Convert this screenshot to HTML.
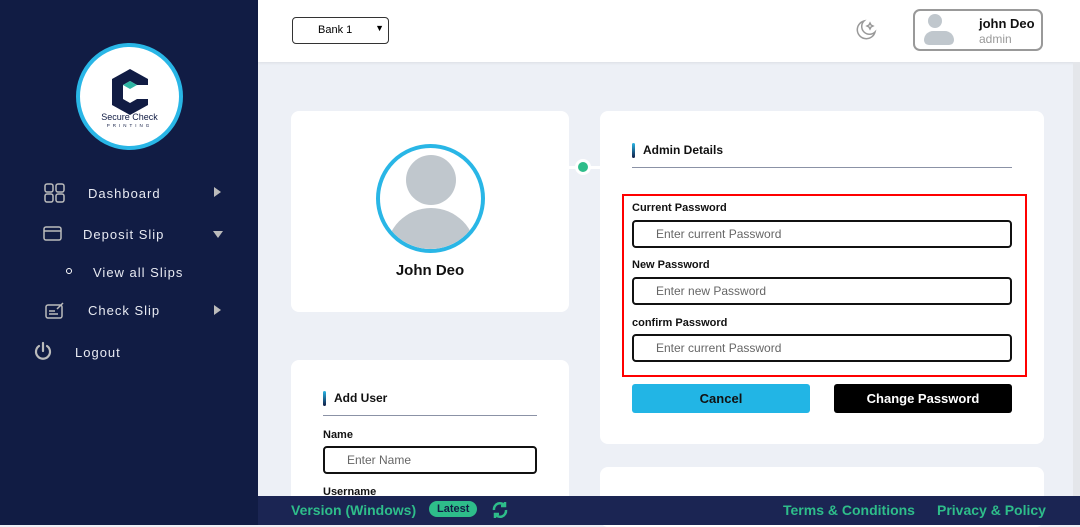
<!DOCTYPE html>
<html><head><style>
*{box-sizing:border-box;margin:0;padding:0}
body{width:1080px;height:525px;overflow:hidden;font-family:"Liberation Sans",sans-serif;background:#edf0f6;position:relative}
.sb{position:absolute;left:0;top:0;width:258px;height:525px;background:#111c44}
.logo{position:absolute;left:76px;top:43px;width:107px;height:107px;border-radius:50%;background:#fff;border:4px solid #29b6e6}
.mi{position:absolute;color:#e8eaf2;font-size:13px;letter-spacing:1px}
.tri{position:absolute;width:0;height:0}
.hdr{position:absolute;left:258px;top:0;width:822px;height:62px;background:#fff;box-shadow:0 1px 3px rgba(0,0,0,.08)}
.card{position:absolute;background:#fff;border-radius:8px}
.lbl{position:absolute;font-size:11px;font-weight:bold;color:#111}
.inp{position:absolute;border:2px solid #111;border-radius:4px;height:28px;font-size:12px;color:#666;padding:5px 0 0 22px}
.ft{position:absolute;left:258px;top:496px;width:822px;height:29px;background:#1b2553;color:#2ebd8a;font-size:14px;font-weight:bold}
</style></head><body>
<div class="sb">
 <div class="logo">
  <svg width="99" height="99" viewBox="0 0 99 99" style="position:absolute;left:0;top:0">
   <polygon points="50,22 68,32 68,38 57,38 50,34 43,38 43,52 50,56 57,52 68,52 68,58 50,68 32,58 32,32" fill="#111c44"/>
   <polygon points="50,34 57,38 50,42 43,38" fill="#2fb6a4"/>
   <text x="49.5" y="73" font-size="9" text-anchor="middle" fill="#111c44" font-family="Liberation Sans">Secure Check</text>
   <text x="49.5" y="80" font-size="4.5" text-anchor="middle" fill="#111c44" letter-spacing="3">PRINTING</text>
  </svg>
 </div>
 <svg style="position:absolute;left:44px;top:183px" width="22" height="20" fill="none" stroke="#bbb" stroke-width="1.5"><rect x="1" y="1" width="8" height="8" rx="2"/><rect x="12" y="1" width="8" height="8" rx="2"/><rect x="1" y="11" width="8" height="8" rx="2"/><rect x="12" y="11" width="8" height="8" rx="2"/></svg>
 <div class="mi" style="left:88px;top:186px">Dashboard</div>
 <div class="tri" style="left:214px;top:187px;border-left:7px solid #bbb;border-top:5px solid transparent;border-bottom:5px solid transparent"></div>
 <svg style="position:absolute;left:43px;top:225px" width="22" height="18" fill="none" stroke="#bbb" stroke-width="1.5"><rect x="1" y="2" width="17" height="13" rx="2"/><line x1="1" y1="6" x2="18" y2="6"/></svg>
 <div class="mi" style="left:83px;top:227px">Deposit Slip</div>
 <div class="tri" style="left:213px;top:231px;border-top:7px solid #bbb;border-left:5px solid transparent;border-right:5px solid transparent"></div>
 <div style="position:absolute;left:66px;top:268px;width:6px;height:6px;border:1.5px solid #fff;border-radius:50%"></div>
 <div class="mi" style="left:93px;top:265px">View all Slips</div>
 <svg style="position:absolute;left:45px;top:301px" width="20" height="18" fill="none" stroke="#bbb" stroke-width="1.5"><rect x="1" y="4" width="16" height="13" rx="2"/><line x1="4" y1="10" x2="10" y2="10"/><line x1="4" y1="13" x2="13" y2="13"/><path d="M12 8 L18 2"/></svg>
 <div class="mi" style="left:88px;top:303px">Check Slip</div>
 <div class="tri" style="left:214px;top:305px;border-left:7px solid #bbb;border-top:5px solid transparent;border-bottom:5px solid transparent"></div>
 <svg style="position:absolute;left:34px;top:341px" width="18" height="20" fill="none" stroke="#bbb" stroke-width="2.2" stroke-linecap="round"><path d="M5 5 A7 7 0 1 0 13 5"/><line x1="9" y1="2" x2="9" y2="10"/></svg>
 <div class="mi" style="left:75px;top:345px">Logout</div>
</div>
<div class="hdr">
 <div style="position:absolute;left:34px;top:17px;width:97px;height:27px;border:1px solid #333;border-radius:4px;font-size:11px;padding:6px 0 0 25px">Bank 1 <span style="position:absolute;right:4px;top:5px;font-size:9px">&#9660;</span></div>
 <svg style="position:absolute;left:596px;top:17px" width="24" height="24" fill="none" stroke="#999" stroke-width="1.5"><path d="M10 4 A9 9 0 1 0 21 15 A7 7 0 0 1 10 4Z"/><path d="M15 8 l1 -2 1 2 2 1 -2 1 -1 2 -1 -2 -2 -1z"/></svg>
 <div style="position:absolute;left:655px;top:9px;width:130px;height:42px;border:2px solid #999;border-radius:7px">
  <div style="position:absolute;left:13px;top:3px;width:14px;height:14px;border-radius:50%;background:#c0c7cd"></div>
  <div style="position:absolute;left:9px;top:20px;width:30px;height:14px;border-radius:15px 15px 8px 8px;background:#c0c7cd"></div>
  <div style="position:absolute;left:64px;top:5px;font-size:13px;font-weight:bold;color:#111">john Deo</div>
  <div style="position:absolute;left:64px;top:21px;font-size:12px;color:#999">admin</div>
 </div>
</div>
<div class="card" style="left:291px;top:111px;width:278px;height:201px">
 <div style="position:absolute;left:85px;top:33px;width:109px;height:109px;border-radius:50%;border:4px solid #29b6e6;overflow:hidden;background:#fff">
  <div style="position:absolute;left:26px;top:7px;width:50px;height:50px;border-radius:50%;background:#c0c7cd"></div>
  <div style="position:absolute;left:6px;top:60px;width:90px;height:60px;border-radius:45px 45px 0 0;background:#c0c7cd"></div>
 </div>
 <div style="position:absolute;left:0;width:278px;top:151px;text-align:center;font-size:15px;font-weight:bold;color:#111">John Deo</div>
</div>
<div style="position:absolute;left:569px;top:166px;width:31px;height:3px;background:#fff"></div>
<div style="position:absolute;left:575px;top:159px;width:16px;height:16px;border-radius:50%;background:#2ebd8a;border:3px solid #fff"></div>
<div class="card" style="left:291px;top:360px;width:278px;height:160px">
 <div style="position:absolute;left:32px;top:31px;width:3px;height:15px;background:linear-gradient(#29b6e6,#111c44);border-radius:2px"></div>
 <div style="position:absolute;left:43px;top:31px;font-size:12px;font-weight:bold;color:#111">Add User</div>
 <div style="position:absolute;left:32px;top:55px;width:214px;height:1px;background:#8b92a6"></div>
 <div class="lbl" style="left:32px;top:69px">Name</div>
 <div class="inp" style="left:32px;top:86px;width:214px">Enter Name</div>
 <div class="lbl" style="left:32px;top:126px">Username</div>
</div>
<div class="card" style="left:600px;top:111px;width:444px;height:333px">
 <div style="position:absolute;left:32px;top:32px;width:3px;height:15px;background:linear-gradient(#29b6e6,#111c44);border-radius:2px"></div>
 <div style="position:absolute;left:43px;top:32px;font-size:12px;font-weight:bold;color:#111">Admin Details</div>
 <div style="position:absolute;left:32px;top:56px;width:380px;height:1px;background:#8b92a6"></div>
 <div style="position:absolute;left:22px;top:83px;width:405px;height:183px;border:2.5px solid #f00"></div>
 <div class="lbl" style="left:32px;top:91px">Current Password</div>
 <div class="inp" style="left:32px;top:109px;width:380px">Enter current Password</div>
 <div class="lbl" style="left:32px;top:148px">New Password</div>
 <div class="inp" style="left:32px;top:166px;width:380px">Enter new Password</div>
 <div class="lbl" style="left:32px;top:206px">confirm Password</div>
 <div class="inp" style="left:32px;top:223px;width:380px">Enter current Password</div>
 <div style="position:absolute;left:32px;top:273px;width:178px;height:29px;background:#22b5e5;border-radius:3px;text-align:center;font-size:13px;font-weight:bold;color:#111;line-height:29px">Cancel</div>
 <div style="position:absolute;left:234px;top:273px;width:178px;height:29px;background:#000;border-radius:3px;text-align:center;font-size:13px;font-weight:bold;color:#fff;line-height:29px">Change Password</div>
</div>
<div class="card" style="left:600px;top:467px;width:444px;height:60px"></div>
<div style="position:absolute;left:1073px;top:62px;width:7px;height:434px;background:#e4e6ea"></div>
<div class="ft">
 <span style="position:absolute;left:33px;top:6px">Version (Windows)</span>
 <span style="position:absolute;left:171px;top:5px;background:#2ebd8a;color:#111c44;font-size:11px;border-radius:10px;padding:2px 8px">Latest</span>
 <svg style="position:absolute;left:232px;top:4px" width="20" height="20" fill="none" stroke="#2ebd8a" stroke-width="2.5"><path d="M4 10 A6 6 0 0 1 15 6"/><path d="M16 10 A6 6 0 0 1 5 14"/><path d="M15 2 v4 h-4" /><path d="M5 18 v-4 h4"/></svg>
 <span style="position:absolute;left:525px;top:6px">Terms &amp; Conditions</span>
 <span style="position:absolute;left:679px;top:6px">Privacy &amp; Policy</span>
</div>
</body></html>
